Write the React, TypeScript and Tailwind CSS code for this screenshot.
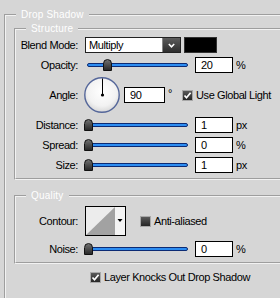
import React from 'react';

function Label({ text }: { text: string }) {
  return <span className="w-[62px] shrink-0 text-right">{text}</span>;
}

function Slider({ value }: { value: number }) {
  const left = Math.round(value * 0.95);
  return (
    <div className="relative ml-[6px] h-[16px] w-[104px] shrink-0">
      <div className="absolute left-[3px] right-0 top-[6px] h-[4px] rounded-full border border-[#0c2b74] bg-[#2d8df2]" />
      <div
        className="absolute top-[2px] h-[12px] w-[9px] rounded-t-full rounded-b-[2px] border border-[#111] bg-gradient-to-b from-[#707070] to-[#2a2a2a]"
        style={{ left }}
      />
    </div>
  );
}

function Field({ value, unit }: { value: string; unit: string }) {
  return (
    <>
      <div className="ml-[7px] h-[16px] w-[38px] shrink-0 border border-black bg-white pl-[5px] leading-[14px]">{value}</div>
      <span className="ml-[3px]">{unit}</span>
    </>
  );
}

function SliderRow({ label, pos, value, unit }: { label: string; pos: number; value: string; unit: string }) {
  return (
    <div className="flex h-[16px] items-center">
      <Label text={label} />
      <Slider value={pos} />
      <Field value={value} unit={unit} />
    </div>
  );
}

function Check({ checked }: { checked: boolean }) {
  return (
    <div className="h-[11px] w-[11px] shrink-0 border border-[#a8a8a8] bg-gradient-to-b from-[#5a5a5a] to-[#262626]">
      {checked && (
        <svg width="9" height="9" viewBox="0 0 9 9">
          <path d="M1.5 4.5 L3.5 6.8 L7.6 1.8" fill="none" stroke="#fff" strokeWidth="1.7" />
        </svg>
      )}
    </div>
  );
}

function Dial() {
  return (
    <svg width="36" height="36" viewBox="0 0 36 36" className="ml-[6px] shrink-0">
      <defs>
        <radialGradient id="dialFill" cx="50%" cy="40%" r="60%">
          <stop offset="0%" stopColor="#ffffff" />
          <stop offset="70%" stopColor="#f2f2f2" />
          <stop offset="100%" stopColor="#d8d8d8" />
        </radialGradient>
      </defs>
      <circle cx="18" cy="18" r="17.2" fill="url(#dialFill)" stroke="#55679a" strokeWidth="1.4" />
      <line x1="18.5" y1="18" x2="18.5" y2="1.5" stroke="#000" strokeWidth="1" />
      <circle cx="18.5" cy="18" r="1.6" fill="#000" />
    </svg>
  );
}

export default function App() {
  return (
    <div className="h-[298px] w-[280px] overflow-hidden bg-[#d6d6d6] font-['Liberation_Sans',Arial,sans-serif] text-[11px] tracking-[-0.4px] text-black">
      <fieldset className="ml-[4px] mt-[9px] w-[320px] border-2 border-[#f2f2f2] pb-[30px] [--tw-border-style:groove] [border-style:groove]">
        <legend className="ml-[10px] px-[5px] text-[10px] leading-[12px] tracking-[0.2px] text-white">Drop Shadow</legend>

        {/* Structure */}
        <fieldset className="ml-[8px] mt-[2px] w-[300px] border-2 border-[#f2f2f2] pb-[5px] pt-[2px] [--tw-border-style:groove] [border-style:groove]">
          <legend className="ml-[10px] px-[5px] text-[10px] leading-[12px] tracking-[0.2px] text-white">Structure</legend>
          <div className="flex flex-col gap-[4px]">
            <div className="flex h-[16px] items-center">
              <Label text="Blend Mode:" />
              <div className="ml-[7px] flex h-[16px] w-[96px] shrink-0 border border-[#222]">
                <div className="flex-1 bg-white pl-[3px] leading-[14px]">Multiply</div>
                <div className="flex w-[18px] items-center justify-center border-l border-[#888] bg-gradient-to-b from-[#5c5c5c] to-[#2e2e2e]">
                  <svg width="7" height="5" viewBox="0 0 7 5">
                    <path d="M0.8 1 L3.5 3.8 L6.2 1" fill="none" stroke="#fff" strokeWidth="1.5" />
                  </svg>
                </div>
              </div>
              <div className="ml-[3px] h-[16px] w-[33px] shrink-0 border border-[#333] bg-black" />
            </div>

            <SliderRow label="Opacity:" pos={20} value="20" unit="%" />

            <div className="flex h-[36px] items-center">
              <Label text="Angle:" />
              <Dial />
              <div className="ml-[4px] h-[16px] w-[41px] shrink-0 border border-black bg-white pl-[5px] leading-[14px]">90</div>
              <span className="ml-[3px] w-[14px] shrink-0 self-start pt-[8px]">°</span>
              <Check checked />
              <span className="ml-[3px]">Use Global Light</span>
            </div>

            <SliderRow label="Distance:" pos={0} value="1" unit="px" />
            <SliderRow label="Spread:" pos={0} value="0" unit="%" />
            <SliderRow label="Size:" pos={0} value="1" unit="px" />
          </div>
        </fieldset>

        {/* Quality */}
        <fieldset className="ml-[8px] mt-[10px] w-[300px] border-2 border-[#f2f2f2] pb-[5px] pt-[4px] [--tw-border-style:groove] [border-style:groove]">
          <legend className="ml-[10px] px-[5px] text-[10px] leading-[12px] tracking-[0.2px] text-white">Quality</legend>
          <div className="flex flex-col gap-[5px]">
            <div className="flex h-[30px] items-center">
              <Label text="Contour:" />
              <div className="ml-[7px] h-[30px] w-[41px] shrink-0 border border-black bg-[#f4f4f4]">
                <svg width="39" height="28" viewBox="0 0 39 28">
                  <rect x="0" y="0" width="29" height="28" fill="#ececec" />
                  <polygon points="0,28 29,0 29,28" fill="#a2a2a2" />
                  <polygon points="31.5,12 36.5,12 34,15" fill="#000" />
                </svg>
              </div>
              <div className="ml-[14px]">
                <Check checked={false} />
              </div>
              <span className="ml-[3px]">Anti-aliased</span>
            </div>
            <SliderRow label="Noise:" pos={0} value="0" unit="%" />
          </div>
        </fieldset>

        <div className="ml-[84px] mt-[5px] flex h-[16px] items-center">
          <Check checked />
          <span className="ml-[3px]">Layer Knocks Out Drop Shadow</span>
        </div>
      </fieldset>
    </div>
  );
}
